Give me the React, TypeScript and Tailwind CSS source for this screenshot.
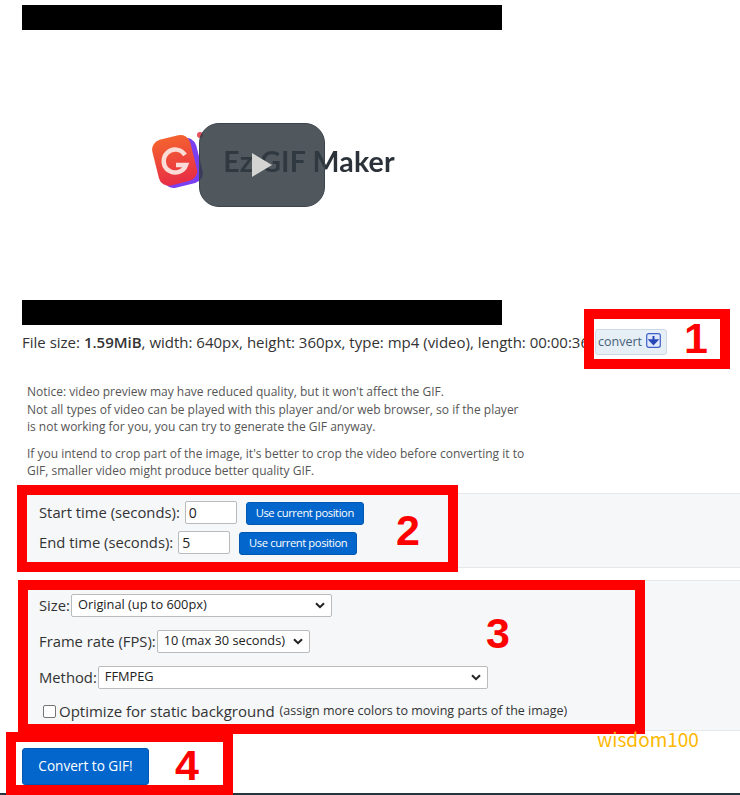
import { ReactNode } from "react";

const openSans = "font-['Open_Sans','Liberation_Sans',sans-serif]";

// red marker boxes drawn over the screenshot
function Marker({ box, num, numPos }: { box: string; num: string; numPos: string }) {
  return (
    <>
      <div className={`absolute border-[10px] border-[#fe0000] ${box}`} />
      <div
        className={`absolute font-['Liberation_Sans',sans-serif] font-bold text-[43px] leading-none text-[#fe0000] ${numPos}`}
      >
        {num}
      </div>
    </>
  );
}

function BlueButton({ children }: { children: ReactNode }) {
  return (
    <button className="h-[23px] w-[118px] rounded-[3px] bg-[#0366cc] text-white text-[11.2px] tracking-[-0.4px] leading-none border border-[#0258b0]">
      {children}
    </button>
  );
}

function TimeRow({ label, value, className }: { label: string; value: string; className?: string }) {
  return (
    <div className={`flex items-center h-[23px] ${className ?? ""}`}>
      <span className="text-[14.8px] text-[#333]">{label}</span>
      <div className="ml-[5px] w-[52px] h-[23px] border border-[#bbb] rounded-[2px] bg-white text-[14px] pl-[3px] leading-[21px] text-[#222]">
        {value}
      </div>
      <div className="ml-[9px]">
        <BlueButton>Use current position</BlueButton>
      </div>
    </div>
  );
}

function FakeSelect({ label, text, width, className }: { label: string; text: string; width: string; className?: string }) {
  return (
    <div className={`flex items-center h-[23px] ${className ?? ""}`}>
      <span className="text-[14.8px] text-[#333]">{label}</span>
      <div className={`ml-[1px] h-[23px] border border-[#bbb] rounded-[2px] bg-white flex items-center justify-between pl-[6px] pr-[6px] text-[12.8px] text-[#222] ${width}`}>
        <span className="whitespace-nowrap">{text}</span>
        <svg width="10" height="7" viewBox="0 0 10 7" fill="none" stroke="#222" strokeWidth="2">
          <path d="M1 1.2 L5 5.2 L9 1.2" />
        </svg>
      </div>
    </div>
  );
}

function EzgifLogo() {
  return (
    <div className="flex items-center blur-[0.4px]">
      <svg width="52" height="62" viewBox="0 0 52 62">
        <defs>
          <linearGradient id="gg" x1="0" y1="0" x2="0" y2="1">
            <stop offset="0" stopColor="#f4622f" />
            <stop offset="1" stopColor="#e72d45" />
          </linearGradient>
        </defs>
        <circle cx="48" cy="5" r="3" fill="#e8505a" />
        <rect x="8" y="10" width="40" height="46" rx="10" fill="#7b3ff2" transform="rotate(-14 28 33)" />
        <rect x="3" y="7" width="39" height="47" rx="10" fill="url(#gg)" transform="rotate(-14 22 30)" />
        <path
          d="M33 25 A11.5 11.5 0 1 0 34 35 L24 35"
          fill="none"
          stroke="#fbdcd6"
          strokeWidth="4.5"
        />
      </svg>
      <span className="ml-[19px] font-['Lato',sans-serif] font-bold text-[28.5px] leading-none tracking-[0.2px] text-[#2b323a]">
        Ez GIF Maker
      </span>
    </div>
  );
}

export default function App() {
  return (
    <div className={`relative w-[740px] h-[795px] overflow-hidden bg-white ${openSans}`}>
      {/* video */}
      <div className="ml-[22px] pt-[5px] w-[480px]">
        <div className="relative flex h-[320px] flex-col">
          <div className="h-[25px] bg-black" />
          <div className="flex flex-1 items-center justify-center pl-[23px] pb-[8px]">
            <EzgifLogo />
          </div>
          <div className="h-[25px] bg-black" />
          <div className="absolute left-[177px] top-[118px] flex h-[84px] w-[126px] items-center justify-center rounded-[20px] border border-[#3d444c] bg-[#313b42]/85">
            <svg width="20" height="24" viewBox="0 0 20 24" className="ml-[-1px]">
              <path d="M0 0 L20 12 L0 24 Z" fill="#d4d5d2" />
            </svg>
          </div>
        </div>
      </div>

      {/* file info */}
      <div className="ml-[22px] mt-[4px] flex h-[26px] items-center whitespace-nowrap text-[15px] text-[#333]">
        <span className="pt-[1px]">
          File size: <b className="font-semibold">1.59MiB</b>, width: 640px, height: 360px, type: mp4 (video), length: 00:00:36
        </span>
        <div className="ml-[6px] flex h-[26px] w-[72px] shrink-0 items-center rounded-[3px] border border-[#cdd9e6] bg-[#e6eef6] pl-[2px] text-[12.5px] text-[#47607a]">
          convert
          <svg width="15" height="15" viewBox="0 0 15 15" className="ml-[4px] mt-[-4px]">
            <rect x="0.7" y="0.7" width="13.6" height="13.6" rx="2" fill="#dfe8fb" stroke="#3f5fc8" strokeWidth="1.2" />
            <path d="M7.5 3 V8 M4 7.2 L7.5 11 L11 7.2 Z" stroke="#2747b8" strokeWidth="2" fill="#2747b8" />
          </svg>
        </div>
      </div>

      {/* notice */}
      <div className="ml-[27px] mt-[28px] w-[510px] text-[12px] leading-[17.5px] text-[#555]">
        <p>
          Notice: video preview may have reduced quality, but it won't affect the GIF.
          <br />
          Not all types of video can be played with this player and/or web browser, so if the player
          <br />
          is not working for you, you can try to generate the GIF anyway.
        </p>
        <p className="mt-[9px]">
          If you intend to crop part of the image, it's better to crop the video before converting it to
          <br />
          GIF, smaller video might produce better quality GIF.
        </p>
      </div>

      {/* time panel */}
      <div className="ml-[22px] mt-[13px] h-[75px] border-y border-[#e6e8ea] bg-[#f5f7f9] pl-[17px] pt-[7px]">
        <TimeRow label="Start time (seconds):" value="0" />
        <TimeRow label="End time (seconds):" value="5" className="mt-[7px]" />
      </div>

      {/* options panel */}
      <div className="ml-[22px] mt-[12px] h-[151px] border-y border-[#e6e8ea] bg-[#f5f7f9] pl-[17px] pt-[13px]">
        <FakeSelect label="Size:" text="Original (up to 600px)" width="w-[261px]" />
        <FakeSelect label="Frame rate (FPS):" text="10 (max 30 seconds)" width="w-[153px]" className="mt-[13px]" />
        <FakeSelect label="Method:" text="FFMPEG" width="w-[390px]" className="mt-[13px]" />
        <div className="mt-[13px] ml-[4px] flex items-center h-[20px] whitespace-nowrap text-[#333]">
          <div className="h-[13px] w-[13px] rounded-[2px] border border-[#767676] bg-white" />
          <span className="ml-[3px] text-[15px]">Optimize for static background</span>
          <span className="ml-[5px] text-[12.5px]">(assign more colors to moving parts of the image)</span>
        </div>
      </div>

      {/* submit */}
      <div className="ml-[22px] mt-[17px]">
        <button className="h-[37px] w-[127px] rounded-[3px] border border-[#0258b0] bg-[#0366cc] pt-[1px] text-[13.6px] text-white">
          Convert to GIF!
        </button>
      </div>
      <div className="absolute bottom-0 left-0 right-0 h-[2px] bg-[#25353f]" />

      <Marker box="left-[584px] top-[309px] h-[60px] w-[146px]" num="1" numPos="left-[684px] top-[317px]" />
      <Marker box="left-[17px] top-[485px] h-[87px] w-[441px]" num="2" numPos="left-[396px] top-[509px]" />
      <Marker box="left-[18px] top-[580px] h-[154px] w-[627px]" num="3" numPos="left-[486px] top-[612px]" />
      <Marker box="left-[6px] top-[732px] h-[63px] w-[227px]" num="4" numPos="left-[175px] top-[744px]" />

      <div className="absolute left-[597px] top-[726px] font-['Noto_Sans_CJK_SC','Noto_Sans',sans-serif] text-[19px] leading-[26px] text-[#fdb800]">
        wisdom100
      </div>
    </div>
  );
}
